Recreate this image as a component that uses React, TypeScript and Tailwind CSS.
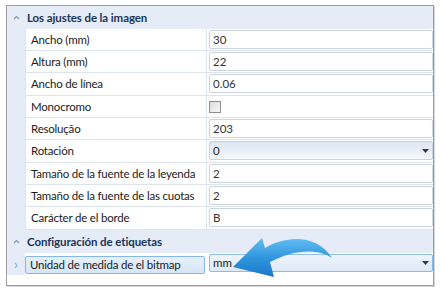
const font = "font-['Lato','Liberation_Sans',sans-serif]";

type Row = { label: string; value: string; kind: "text" | "check" | "select"; h: string };

const rows: Row[] = [
  { label: "Ancho (mm)", value: "30", kind: "text", h: "h-[22px]" },
  { label: "Altura (mm)", value: "22", kind: "text", h: "h-[22px]" },
  { label: "Ancho de línea", value: "0.06", kind: "text", h: "h-[23px]" },
  { label: "Monocromo", value: "", kind: "check", h: "h-[22px]" },
  { label: "Resolução", value: "203", kind: "text", h: "h-[22px]" },
  { label: "Rotación", value: "0", kind: "select", h: "h-[23px]" },
  { label: "Tamaño de la fuente de la leyenda", value: "2", kind: "text", h: "h-[22px]" },
  { label: "Tamaño de la fuente de las cuotas", value: "2", kind: "text", h: "h-[22px]" },
  { label: "Carácter de el borde", value: "B", kind: "text", h: "h-[23px]" },
];

function Caret() {
  return (
    <svg width="7" height="5" viewBox="0 0 7 5" className="text-[#8496ab]">
      <path d="M1 4 L3.5 1.5 L6 4" fill="none" stroke="currentColor" strokeWidth="1.1" />
    </svg>
  );
}

function DropArrow() {
  return (
    <svg width="7" height="4" viewBox="0 0 7 4" className="mr-[3px]">
      <path d="M0 0 H7 L3.5 4 Z" fill="#3a3a3a" />
    </svg>
  );
}

function Category({ title }: { title: string }) {
  return (
    <div className="flex h-[23px] items-center bg-[#e5ecf8]">
      <div className="flex w-[18px] justify-center">
        <Caret />
      </div>
      <span className="whitespace-nowrap pl-[2px] text-[11.5px] font-bold tracking-[-0.1px] text-[#1c3557]">
        {title}
      </span>
    </div>
  );
}

function ValueCell({ row }: { row: Row }) {
  if (row.kind === "check") {
    return (
      <div className="flex h-full items-center pl-[2px]">
        <div className="h-[12px] w-[12px] border border-[#8e8e8e] bg-gradient-to-br from-[#dcdcdc] to-[#f8f8f8]" />
      </div>
    );
  }
  if (row.kind === "select") {
    return (
      <div className="ml-[2px] mt-[1px] flex h-[19px] items-center justify-between rounded-[2px] border border-[#c8d4e3] bg-gradient-to-b from-[#dde6f2] to-[#f6f8fb] pl-[3px] text-[11.5px] text-[#222]">
        <span>{row.value}</span>
        <DropArrow />
      </div>
    );
  }
  return (
    <div className="ml-[2px] mt-[1px] flex h-[19px] items-center rounded-[2px] border border-[#cbd5e2] bg-white pl-[3px] text-[11.5px] text-[#333]">
      {row.value}
    </div>
  );
}

function Arrow() {
  return (
    <svg
      width="108"
      height="48"
      viewBox="0 0 108 48"
      className="pointer-events-none absolute left-[228px] top-[232px]"
    >
      <defs>
        <linearGradient id="ag" x1="0" y1="0" x2="0" y2="1">
          <stop offset="0" stopColor="#63bdf4" />
          <stop offset="0.55" stopColor="#2d93dc" />
          <stop offset="1" stopColor="#1a77c8" />
        </linearGradient>
      </defs>
      <path
        d="M5 35 L34 6 L37 16 C57 4 88 1 104 26 C88 15 63 19 42 30 L46 45 Z"
        fill="url(#ag)"
      />
    </svg>
  );
}

export default function App() {
  return (
    <div className={`relative h-[292px] w-[440px] bg-white pl-[6px] pt-[5px] ${font}`}>
      <div className="flex h-[281px] w-[428px] flex-col border border-[#9d9d9d] bg-white shadow-[1px_1px_0_#d6d6d6]">
        <Category title="Los ajustes de la imagen" />
        {rows.map((row) => (
          <div key={row.label} className={`flex ${row.h}`}>
            <div className="w-[18px] bg-[#e5ecf8]" />
            <div className="flex w-[181px] items-center whitespace-nowrap border-b border-l border-[#dde4ee] pl-[5px] text-[11.5px] tracking-[-0.2px] text-[#1b1b1b]">
              {row.label}
            </div>
            <div className="flex-1 border-b border-l border-[#dde4ee]">
              <ValueCell row={row} />
            </div>
          </div>
        ))}
        <Category title="Configuración de etiquetas" />
        <div className="flex h-[22px]">
          <div className="flex w-[18px] items-center justify-center bg-[#e5ecf8] pb-[1px] text-[14px] text-[#8aa0b8]">
            ›
          </div>
          <div className="flex w-[182px] items-center pt-[1px]">
            <div className="flex h-[18px] w-[180px] items-center whitespace-nowrap rounded-[2px] border border-[#86b6ea] bg-gradient-to-b from-[#e6f0fb] to-[#d6e6f8] pl-[4px] text-[11.5px] tracking-[-0.2px] text-[#1b1b1b]">
              Unidad de medida de el bitmap
            </div>
          </div>
          <div className="flex-1 pt-[1px]">
            <div className="ml-[2px] flex h-[18px] items-center justify-between rounded-[2px] border border-[#8cbaea] bg-gradient-to-b from-[#eef4fc] to-[#dde9f8] pl-[3px] text-[11.5px] text-[#222]">
              <span>mm</span>
              <DropArrow />
            </div>
          </div>
        </div>
      </div>
      <Arrow />
    </div>
  );
}
